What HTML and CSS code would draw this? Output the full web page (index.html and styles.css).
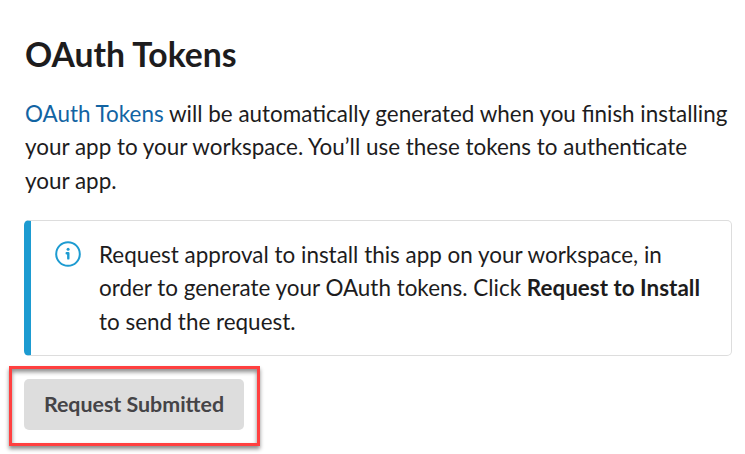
FILE: index.html
```html
<!DOCTYPE html>
<html lang="en">
<head>
<meta charset="utf-8">
<title>OAuth Tokens</title>
<link rel="stylesheet" href="styles.css">
</head>
<body>
<main class="section">
  <h1 class="title">OAuth Tokens</h1>
  <p class="intro"><a class="link" href="#">OAuth Tokens</a> will be automatically generated when you finish installing<br>your app to your workspace. You’ll use these tokens to authenticate<br>your app.</p>
  <div class="notice">
    <svg class="icon" viewBox="0 0 26 26" width="26" height="26" fill="none" stroke="#1d9bd1">
      <circle cx="13" cy="13" r="11.8" stroke-width="2"/>
      <path d="M11.7 12.2h1.6v5.2" stroke-width="2.4" stroke-linecap="round" stroke-linejoin="round"/>
      <circle cx="13.1" cy="8.3" r="1.5" fill="#1d9bd1" stroke="none"/>
    </svg>
    <p class="notice-text">Request approval to install this app on your workspace, in<br>order to generate your OAuth tokens. Click <b>Request to Install</b><br>to send the request.</p>
  </div>
  <div class="highlight"><button class="button">Request Submitted</button></div>
</main>
</body>
</html>
```
FILE: styles.css
```css
* { box-sizing: border-box; }
body { margin: 0; background: #fff; color: #1d1c1d; font-family: Lato, sans-serif; }
.section { min-height: 454px; padding: 32px 13px 0 24px; }
.title { margin: 0 0 0 1px; font-size: 33.7px; line-height: 44px; font-weight: 700; }
.intro, .notice-text { margin: 0; font-size: 22.44px; line-height: 33.6px; white-space: nowrap; }
.intro { margin: 20.6px 0 0 1px; }
.link { color: #1264a3; text-decoration: none; }
.notice { display: flex; margin-top: 22.6px; height: 136px; padding: 16.7px 0 0 24px; border: 1px solid #ddd; border-left: 7px solid #1d9bd1; border-radius: 5px; }
.icon { flex: none; margin: 3.3px 18px 0 0; }
.highlight { width: 251px; height: 80px; margin: 10px 0 0 -15px; padding: 10px 12px; border: 3px solid #ff4040; box-shadow: 0 3px 4px rgba(0,0,0,.45), inset 0 3px 4px rgba(0,0,0,.45); }
.button { display: block; width: 220px; height: 51px; padding: 0; border: 0; border-radius: 5px; background: #ddd; color: #454447; font: 700 21.4px/50px Lato, sans-serif; }
```
